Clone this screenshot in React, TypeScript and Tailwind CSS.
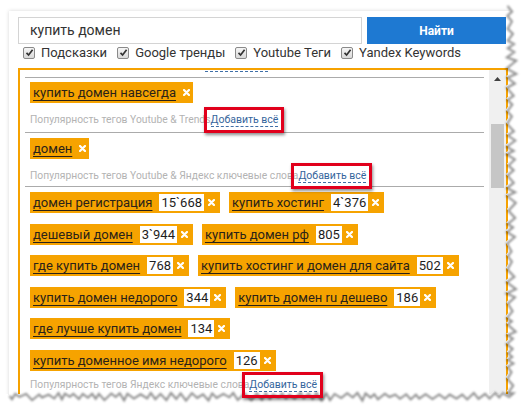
import type { ReactNode } from 'react';

type Tag = { label: string; count?: string };

const rows: Tag[][] = [
  [{ label: 'домен регистрация', count: '15`668' }, { label: 'купить хостинг', count: '4`376' }],
  [{ label: 'дешевый домен', count: '3`944' }, { label: 'купить домен рф', count: '805' }],
  [{ label: 'где купить домен', count: '768' }, { label: 'купить хостинг и домен для сайта', count: '502' }],
  [{ label: 'купить домен недорого', count: '344' }, { label: 'купить домен ru дешево', count: '186' }],
  [{ label: 'где лучше купить домен', count: '134' }],
  [{ label: 'купить доменное имя недорого', count: '126' }],
];

const options = ['Подсказки', 'Google тренды', 'Youtube Теги', 'Yandex Keywords'];

// deterministic jitter for the torn paper edge
const makeRand = (seed: number) => () => {
  seed = (seed * 9301 + 49297) % 233280;
  return seed / 233280;
};

const tornEdge = () => {
  const rand = makeRand(7);
  const pts: string[] = [];
  let y = 4;
  let i = 0;
  while (y < 392) {
    const x = i % 2 === 0 ? 505 + rand() * 2 : 510 + rand() * 5;
    pts.push(`${x.toFixed(1)},${y.toFixed(1)}`);
    y += 3 + rand() * 5;
    i++;
  }
  let x = 512;
  i = 0;
  while (x > 8) {
    const yy = i % 2 === 0 ? 391 + rand() * 2 : 395 + rand() * 4;
    pts.push(`${x.toFixed(1)},${yy.toFixed(1)}`);
    x -= 3 + rand() * 4;
    i++;
  }
  pts.push('8,394');
  return pts;
};

function XMark() {
  return (
    <svg width="7" height="7" viewBox="0 0 7 7" className="block shrink-0">
      <path d="M1 1L6 6M6 1L1 6" stroke="white" strokeWidth="2.2" strokeLinecap="round" />
    </svg>
  );
}

function TagChip({ tag }: { tag: Tag }) {
  return (
    <span className="flex h-[21px] shrink-0 items-center whitespace-nowrap bg-[#f6a300] pl-[3px] pr-[5px]">
      <span className="text-[13px] leading-[21px] text-[#2a2218] underline decoration-1 underline-offset-[3px]">{tag.label}</span>
      {tag.count ? (
        <>
          <span className="ml-[7px] bg-white px-[2px] text-[13px] leading-[17px] text-[#1d1d1d]">{tag.count}</span>
          <span className="ml-[4px]"><XMark /></span>
        </>
      ) : (
        <span className="ml-[7px] mr-[-2px]"><XMark /></span>
      )}
    </span>
  );
}

function AddAll() {
  return (
    <span className="relative inline-block h-[16px] leading-[15px]">
      <span className="border-b border-dashed border-[#3f6fa8] text-[10.5px] text-[#35659c]">Добавить всё</span>
      <span className="pointer-events-none absolute -bottom-[5px] -left-[7px] -right-[6px] -top-[5px] z-20 border-[3px] border-[#e1001c] shadow-[1px_2px_3px_rgba(0,0,0,0.45)]" />
    </span>
  );
}

function Subtitle({ children }: { children: ReactNode }) {
  return (
    <div className="flex h-[18px] items-center whitespace-nowrap text-[10.3px] text-[#b3b3b3]">
      <span>{children}</span>
      <AddAll />
    </div>
  );
}

function CheckBox() {
  return (
    <span className="flex h-[12px] w-[12px] items-center justify-center rounded-[2px] border border-[#8a8a8a] bg-gradient-to-b from-[#f6f6f6] to-[#d9d9d9]">
      <svg width="9" height="9" viewBox="0 0 9 9">
        <path d="M1.5 4.8L3.6 7L7.6 1.8" fill="none" stroke="#333" strokeWidth="1.7" />
      </svg>
    </span>
  );
}

export default function App() {
  const edge = tornEdge();
  const fill = `M530,0 L506,0 L${edge.join(' L')} L0,394 L0,416 L530,416 Z`;

  return (
    <div className="relative h-[416px] w-[530px] overflow-hidden bg-white font-['Roboto',sans-serif]">
      <div className="ml-[9px] mt-[11px] h-[400px] w-[505px] bg-white pl-[9px] pt-[6px] shadow-[0_0_4px_rgba(0,0,0,0.16)]">
        <div className="flex h-[27px] gap-[5px]">
          <div className="flex w-[344px] items-center border border-[#d4d4d4] bg-white px-[11px] text-[14px] text-[#333]">купить домен</div>
          <button type="button" className="w-[139px] bg-[#1e79d2] text-[12px] font-bold text-white">Найти</button>
        </div>

        <div className="flex h-[17px] items-center pl-[5px] text-[13px] text-[#333]">
          {options.map((label, idx) => (
            <span key={label} className={`flex items-center gap-[6px] ${idx === 0 ? '' : 'ml-[10px]'}`}>
              <CheckBox />
              <span>{label}</span>
            </span>
          ))}
        </div>

        <div className="mt-[7px] flex w-[490px] border-x-2 border-t-2 border-[#f6a200]">
          <div className="min-w-0 flex-1 px-[5px]">
            <div className="h-[7px] border-b border-[#ababab]">
              <div className="ml-[180px] mt-[1px] w-[63px] border-t border-dashed border-[#3f6fa8]" />
            </div>

            <div className="border-b border-[#ababab] pb-[3px] pl-[5px] pt-[4px]">
              <div className="flex">
                <TagChip tag={{ label: 'купить домен навсегда' }} />
              </div>
              <div className="mt-[8px]">
                <Subtitle>Популярность тегов Youtube &amp; Trends</Subtitle>
              </div>
            </div>

            <div className="border-b border-[#ababab] pb-[1px] pl-[5px] pt-[5px]">
              <div className="flex">
                <TagChip tag={{ label: 'домен' }} />
              </div>
              <div className="mt-[8px]">
                <Subtitle>Популярность тегов Youtube &amp; Яндекс ключевые слова</Subtitle>
              </div>
            </div>

            <div className="pl-[5px] pt-[5px]">
              <div className="flex flex-col gap-[10.6px]">
                {rows.map((row, idx) => (
                  <div key={idx} className="flex gap-[9px]">
                    {row.map((tag) => (
                      <TagChip key={tag.label} tag={tag} />
                    ))}
                  </div>
                ))}
              </div>
              <div className="mt-[5px]">
                <Subtitle>Популярность тегов Яндекс ключевые слова</Subtitle>
              </div>
            </div>
          </div>

          <div className="relative w-[17px] shrink-0 bg-[#f0f0f0]">
            <svg width="17" height="17" viewBox="0 0 17 17" className="block">
              <path d="M5 11L8.5 7L12 11Z" fill="#404040" />
            </svg>
            <div className="ml-[2px] mt-[37px] h-[64px] w-[13px] bg-[#c6c6c6]" />
          </div>
        </div>
      </div>

      <svg className="pointer-events-none absolute inset-0 z-10" width="530" height="416" viewBox="0 0 530 416">
        <defs>
          <filter id="tornBlur" x="-5%" y="-5%" width="110%" height="110%">
            <feGaussianBlur stdDeviation="1.1" />
          </filter>
        </defs>
        <path d={fill} fill="white" />
        <polyline
          points={edge.join(' ')}
          fill="none"
          stroke="rgba(0,0,0,0.45)"
          strokeWidth="2"
          transform="translate(1.5 1.8)"
          filter="url(#tornBlur)"
        />
      </svg>
    </div>
  );
}
